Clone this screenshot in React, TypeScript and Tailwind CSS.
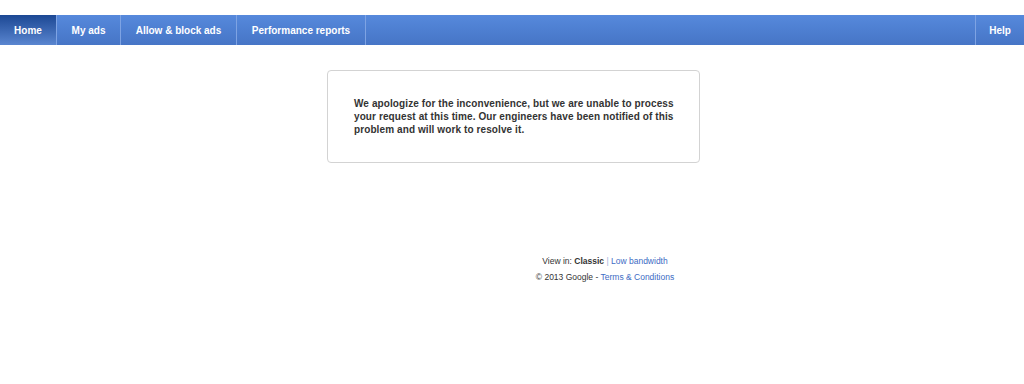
import React from 'react';

const tabs = [
  { label: 'Home', w: 'w-[57px]', active: true },
  { label: 'My ads', w: 'w-[64px]' },
  { label: 'Allow & block ads', w: 'w-[116px]' },
  { label: 'Performance reports', w: 'w-[129px]' },
];

const App: React.FC = () => {
  return (
    <div className="min-h-[384px] bg-white font-['Liberation_Sans',Arial,sans-serif] pt-[15px]">
      {/* top nav */}
      <div className="flex h-[30px] bg-gradient-to-b from-[#5689dc] to-[#4675c6] text-[10px] font-bold text-white">
        {tabs.map((t) => (
          <div
            key={t.label}
            className={`${t.w} flex items-center justify-center border-r border-[#7ea3e3] ${
              t.active ? 'bg-gradient-to-b from-[#1c4894] to-[#5a86d0]' : ''
            }`}
          >
            {t.label}
          </div>
        ))}
        <div className="flex-1" />
        <div className="w-[49px] flex items-center justify-center border-l border-[#7ea3e3]">Help</div>
      </div>

      {/* error box */}
      <div className="flex justify-center pt-[25px] pl-[3px]">
        <div className="w-[373px] h-[93px] rounded-[4px] border border-[#d3d3d3] pl-[26px] pr-[10px] pt-[26px]">
          <p className="text-[10px] tracking-[0.1px] font-bold leading-[13px] text-[#333333] whitespace-nowrap">
            We apologize for the inconvenience, but we are unable to process
            <br />
            your request at this time. Our engineers have been notified of this
            <br />
            problem and will work to resolve it.
          </p>
        </div>
      </div>

      {/* footer */}
      <div className="flex flex-col items-center pt-[90px] pl-[186px] text-[8.5px] text-[#333333] leading-[16px]">
        <div>
          View in: <span className="font-bold">Classic</span> <span className="text-[#9db3dd]">|</span>{' '}
          <span className="text-[#3d6bc4]">Low bandwidth</span>
        </div>
        <div>
          © 2013 Google - <span className="text-[#3d6bc4]">Terms &amp; Conditions</span>
        </div>
      </div>
    </div>
  );
};

export default App;
